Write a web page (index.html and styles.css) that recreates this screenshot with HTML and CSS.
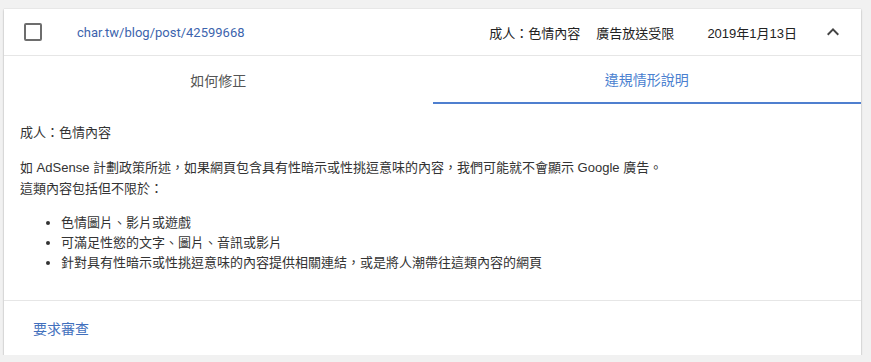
FILE: index.html
```html
<!DOCTYPE html>
<html lang="zh-Hant">
<head>
<meta charset="utf-8">
<link rel="stylesheet" href="styles.css">
</head>
<body>
<div class="card">
  <div class="header">
    <span class="checkbox"></span>
    <a class="url">char.tw/blog/post/42599668</a>
    <span class="spacer"></span>
    <span class="reason">成人：色情內容</span>
    <span class="status">廣告放送受限</span>
    <span class="date">2019年1月13日</span>
    <svg class="chevron" width="24" height="24" viewBox="0 0 24 24"><path d="M7.41 15.41L12 10.83l4.59 4.58L18 14l-6-6-6 6z" fill="#444"/></svg>
  </div>
  <div class="tabs">
    <div class="tab">如何修正</div>
    <div class="tab active">違規情形說明</div>
  </div>
  <div class="content">
    <p class="title">成人：色情內容</p>
    <p class="para">如 AdSense 計劃政策所述，如果網頁包含具有性暗示或性挑逗意味的內容，我們可能就不會顯示 Google 廣告。<br>這類內容包括但不限於：</p>
    <ul class="list">
      <li>色情圖片、影片或遊戲</li>
      <li>可滿足性慾的文字、圖片、音訊或影片</li>
      <li>針對具有性暗示或性挑逗意味的內容提供相關連結，或是將人潮帶往這類內容的網頁</li>
    </ul>
  </div>
  <div class="footer">
    <a class="review">要求審查</a>
  </div>
</div>
</body>
</html>
```
FILE: styles.css
```css
html, body {
  margin: 0;
  padding: 0;
}
body {
  background: #f1f1f1;
  font-family: Arial, "Liberation Sans", "Noto Sans CJK TC", sans-serif;
  font-size: 13px;
  color: #333;
}
.card {
  margin: 9px 0 0 4px;
  width: 857px;
  height: 346px;
  background: #fff;
  box-shadow: 0 1px 2px rgba(0,0,0,0.25), 0 0 1px rgba(0,0,0,0.15);
  display: flex;
  flex-direction: column;
}
.header {
  height: 46px;
  border-bottom: 1px solid #e6e6e6;
  display: flex;
  align-items: center;
  padding: 0 16px 0 20px;
}
.checkbox {
  width: 14px;
  height: 14px;
  border: 2px solid #6d6d6d;
  border-radius: 2px;
  flex: none;
}
.url {
  margin-left: 35px;
  color: #3c64ad;
  font-family: Roboto, "Liberation Sans", sans-serif;
  font-size: 13px;
}
.spacer { flex: 1; }
.reason { color: #222; }
.status { margin-left: 16px; color: #222; }
.date { margin-left: 33px; color: #222; }
.chevron { margin-left: 24px; }
.tabs {
  display: flex;
  height: 48px;
}
.tab {
  flex: 1;
  display: flex;
  align-items: center;
  justify-content: center;
  color: #555;
  font-size: 14px;
}
.tab.active {
  color: #4a7fd0;
  border-bottom: 2px solid #4f7fcf;
}
.content {
  flex: 1;
  padding: 0 16px;
  border-bottom: 1px solid #e6e6e6;
}
.title {
  margin: 19px 0 0;
  line-height: 20px;
}
.para {
  margin: 14px 0 0;
  line-height: 21px;
}
.list {
  margin: 14px 0 0;
  padding-left: 41px;
  line-height: 20px;
}
.footer {
  height: 54px;
  display: flex;
  align-items: center;
  padding-left: 29px;
}
.review {
  color: #4270bd;
  font-size: 14px;
}
```
